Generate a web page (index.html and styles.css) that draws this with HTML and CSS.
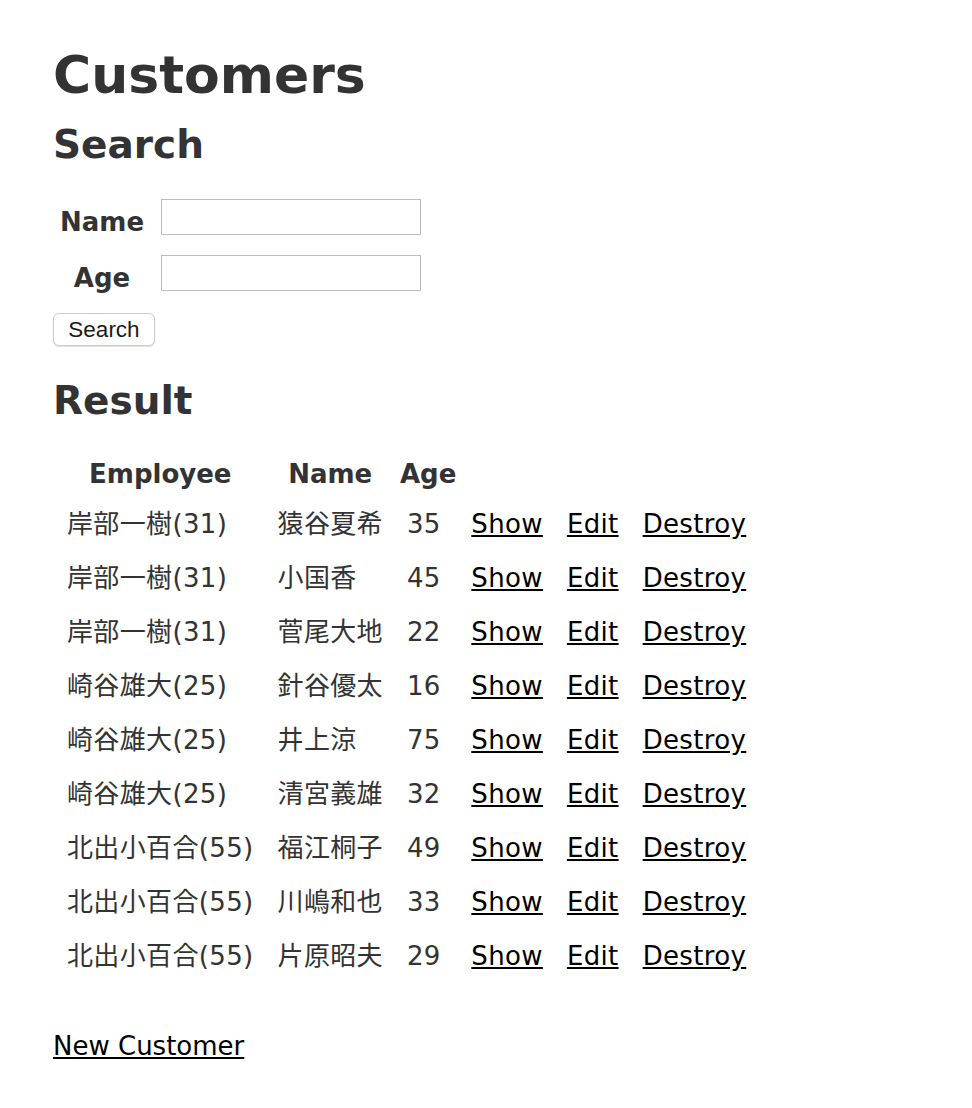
FILE: index.html
```html
<!DOCTYPE html>
<html lang="ja">
<head>
<meta charset="utf-8">
<title>Customers</title>
<link rel="stylesheet" href="styles.css">
</head>
<body>
<main class="page">
  <h1 class="title">Customers</h1>
  <h2 class="section">Search</h2>
  <form class="search-form">
    <div class="field">
      <label class="field-label" for="name">Name</label>
      <input class="field-input" id="name" type="text">
    </div>
    <div class="field">
      <label class="field-label" for="age">Age</label>
      <input class="field-input" id="age" type="text">
    </div>
    <button class="search-btn" type="button">Search</button>
  </form>
  <h2 class="section result-title">Result</h2>
  <table class="results">
    <thead>
      <tr><th>Employee</th><th>Name</th><th class="col-age">Age</th><th colspan="3"></th></tr>
    </thead>
    <tbody>
      <tr><td>岸部一樹(31)</td><td>猿谷夏希</td><td>35</td><td><a href="#">Show</a></td><td><a href="#">Edit</a></td><td><a href="#">Destroy</a></td></tr>
      <tr><td>岸部一樹(31)</td><td>小国香</td><td>45</td><td><a href="#">Show</a></td><td><a href="#">Edit</a></td><td><a href="#">Destroy</a></td></tr>
      <tr><td>岸部一樹(31)</td><td>菅尾大地</td><td>22</td><td><a href="#">Show</a></td><td><a href="#">Edit</a></td><td><a href="#">Destroy</a></td></tr>
      <tr><td>崎谷雄大(25)</td><td>針谷優太</td><td>16</td><td><a href="#">Show</a></td><td><a href="#">Edit</a></td><td><a href="#">Destroy</a></td></tr>
      <tr><td>崎谷雄大(25)</td><td>井上涼</td><td>75</td><td><a href="#">Show</a></td><td><a href="#">Edit</a></td><td><a href="#">Destroy</a></td></tr>
      <tr><td>崎谷雄大(25)</td><td>清宮義雄</td><td>32</td><td><a href="#">Show</a></td><td><a href="#">Edit</a></td><td><a href="#">Destroy</a></td></tr>
      <tr><td>北出小百合(55)</td><td>福江桐子</td><td>49</td><td><a href="#">Show</a></td><td><a href="#">Edit</a></td><td><a href="#">Destroy</a></td></tr>
      <tr><td>北出小百合(55)</td><td>川嶋和也</td><td>33</td><td><a href="#">Show</a></td><td><a href="#">Edit</a></td><td><a href="#">Destroy</a></td></tr>
      <tr><td>北出小百合(55)</td><td>片原昭夫</td><td>29</td><td><a href="#">Show</a></td><td><a href="#">Edit</a></td><td><a href="#">Destroy</a></td></tr>
    </tbody>
  </table>
  <p class="new-link"><a href="#">New Customer</a></p>
</main>
</body>
</html>
```

FILE: styles.css
```css
html, body {
  margin: 0;
  padding: 0;
  background: #fff;
}

body {
  color: #333;
  font-family: "DejaVu Sans", Verdana, "Noto Sans CJK JP", sans-serif;
  font-size: 26px;
  line-height: 36px;
}

.page {
  padding: 45px 53px 40px;
}

a {
  color: #000;
}

.title {
  margin: 0;
  font-size: 52px;
  line-height: 60px;
  font-weight: bold;
}

.section {
  margin: 17px 0 0;
  font-size: 39px;
  line-height: 45px;
  font-weight: bold;
}

.search-form {
  margin-top: 32px;
  display: flex;
  flex-direction: column;
  align-items: flex-start;
}

.field {
  display: flex;
  align-items: flex-start;
  height: 36px;
  margin-bottom: 20px;
}

.field-label {
  box-sizing: border-box;
  width: 90px;
  height: 36px;
  margin-left: 4px;
  padding-top: 5px;
  text-align: center;
  font-weight: bold;
  line-height: 36px;
}

.field-input {
  box-sizing: border-box;
  margin: 0 0 0 14px;
  width: 260px;
  height: 36px;
  border: 1px solid #bdbdbd;
  border-radius: 0;
  padding: 0 6px;
  font-family: "DejaVu Sans", sans-serif;
  font-size: 22px;
  background: #fff;
  outline: none;
}

.search-btn {
  margin-top: 2px;
  box-sizing: border-box;
  width: 102px;
  height: 33px;
  padding: 0;
  background: #fff;
  border: 1px solid #cbcbcb;
  border-radius: 6px;
  box-shadow: 0 1px 1px rgba(0, 0, 0, 0.12);
  color: #1a1a1a;
  font-family: "Liberation Sans", Arial, sans-serif;
  font-size: 22.5px;
  line-height: 31px;
}

.result-title {
  margin-top: 32px;
}

.results {
  margin-top: 29px;
  border-collapse: separate;
  border-spacing: 4px;
}

.results th {
  padding: 0 0 10px;
  font-weight: bold;
  text-align: center;
  line-height: 36px;
}

.results th.col-age {
  padding: 0 1px 10px 3px;
}

.results td {
  padding: 0 10px 14px;
  line-height: 36px;
  text-align: left;
  white-space: nowrap;
  letter-spacing: 0.35px;
}

.new-link {
  margin: 36px 0 0;
  line-height: 36px;
}
```
